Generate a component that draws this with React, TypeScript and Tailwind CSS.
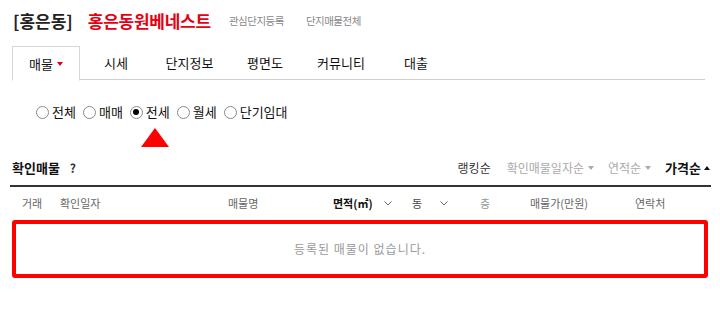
import React from 'react';

const FONT = "font-['Noto_Sans_CJK_KR','Noto_Sans',sans-serif]";

const tabs = [
  { label: '시세', w: 'w-[72px]' },
  { label: '단지정보', w: 'w-[75px]' },
  { label: '평면도', w: 'w-[76px]' },
  { label: '커뮤니티', w: 'w-[76px]' },
  { label: '대출', w: 'w-[74px]' },
];
const radios = ['전체', '매매', '전세', '월세', '단기임대'];

const Radio: React.FC<{ label: string; checked?: boolean }> = ({ label, checked }) => (
  <label className="flex items-center gap-[3px]">
    <span className="w-[13px] h-[13px] rounded-full border border-[#8a8a8a] bg-white flex items-center justify-center">
      {checked && <span className="w-[6px] h-[6px] rounded-full bg-black" />}
    </span>
    <span className="text-[13px] text-[#111]">{label}</span>
  </label>
);

const Caret: React.FC<{ up?: boolean; className?: string }> = ({ up, className }) => (
  <svg width="6" height="4" viewBox="0 0 6 4" className={className}>
    {up ? <path d="M0 4 L3 0 L6 4 Z" fill="currentColor" /> : <path d="M0 0 L6 0 L3 4 Z" fill="currentColor" />}
  </svg>
);

const Chevron: React.FC = () => (
  <svg width="8" height="5" viewBox="0 0 8 5" className="text-[#666]">
    <path d="M0.5 0.5 L4 4 L7.5 0.5" stroke="currentColor" strokeWidth="1" fill="none" />
  </svg>
);

export default function App() {
  return (
    <div className={`w-[720px] h-[321px] bg-white overflow-hidden ${FONT}`}>
      {/* title */}
      <div className="flex items-center h-[30px] mt-[6px] pl-[13px]">
        <span className="text-[17px] font-bold text-[#222]">[홍은동]</span>
        <span className="ml-[15px] text-[17px] font-bold text-[#e60012] tracking-[-0.25px]">홍은동원베네스트</span>
        <span className="ml-[18px] text-[10.5px] text-[#888] tracking-[-0.5px]">관심단지등록</span>
        <span className="ml-[22px] text-[10.5px] text-[#888] tracking-[-0.5px]">단지매물전체</span>
      </div>

      {/* tabs */}
      <div className="flex mt-[10px] ml-[12px] mr-[15px] h-[34px] border-b border-[#cfcfcf]">
        <div className="w-[68px] h-[35px] -mb-px flex items-center justify-center gap-[4px] border border-[#d6d6d6] border-b-white bg-white text-[13px] text-[#111]">
          매물
          <Caret className="text-[#e60012]" />
        </div>
        {tabs.map((t) => (
          <div key={t.label} className={`${t.w} flex items-center justify-center text-[13px] text-[#111]`}>
            {t.label}
          </div>
        ))}
      </div>

      {/* radios */}
      <div className="flex items-center gap-[7px] mt-[24px] pl-[36px] h-[16px]">
        {radios.map((r) => (
          <Radio key={r} label={r} checked={r === '전세'} />
        ))}
      </div>

      {/* pointer */}
      <div className="ml-[141px] mt-[8px] w-0 h-0 border-l-[14px] border-r-[14px] border-b-[19px] border-l-transparent border-r-transparent border-b-[#ff0000]" />

      {/* sort bar */}
      <div className="flex items-center justify-between mt-[12px] ml-[12px] mr-[10px] h-[18px]">
        <div className="flex items-center gap-[10px]">
          <span className="text-[13px] font-bold text-[#111]">확인매물</span>
          <span className="text-[12px] font-bold text-[#333]">?</span>
        </div>
        <div className="flex items-center text-[12px]">
          <span className="text-[#333]">랭킹순</span>
          <span className="ml-[16px] text-[#aaa] flex items-center gap-[4px]">
            확인매물일자순 <Caret className="text-[#aaa]" />
          </span>
          <span className="ml-[14px] text-[#aaa] flex items-center gap-[4px]">
            연적순 <Caret className="text-[#aaa]" />
          </span>
          <span className="ml-[14px] font-bold text-[13px] text-[#111] flex items-center gap-[3px]">
            가격순 <Caret up className="text-[#111]" />
          </span>
        </div>
      </div>

      <div className="mt-[8px] ml-[10px] mr-[9px] h-[2px] bg-[#333]" />

      {/* column headers */}
      <div className="flex items-center h-[32px] ml-[22px] text-[11px] text-[#666]">
        <span className="w-[38px]">거래</span>
        <span className="w-[168px]">확인일자</span>
        <span className="w-[105px]">매물명</span>
        <span className="w-[51px] text-[#111] font-bold">면적(㎡)</span>
        <span className="w-[28px]"><Chevron /></span>
        <span className="w-[28px] text-[#444]">동</span>
        <span className="w-[40px]"><Chevron /></span>
        <span className="w-[50px] text-[#999]">층</span>
        <span className="w-[105px]">매물가(만원)</span>
        <span>연락처</span>
      </div>

      {/* empty state */}
      <div className="ml-[12px] mr-[12px] mt-[1px] h-[58px] rounded-[3px] border-[4px] border-[#ff0000] flex items-center justify-center text-[12px] tracking-[1px] text-[#999]">
        등록된 매물이 없습니다.
      </div>
    </div>
  );
}
